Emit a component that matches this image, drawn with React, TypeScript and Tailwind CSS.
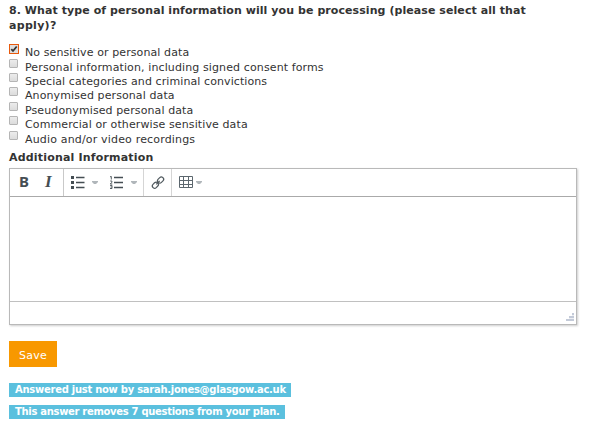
import React from "react";

const options = [
  { label: "No sensitive or personal data", checked: true, row: "h-[15px]", text: "tracking-[0.1px]" },
  { label: "Personal information, including signed consent forms", row: "h-[14px]", text: "tracking-[0.115px]" },
  { label: "Special categories and criminal convictions", row: "h-[14px]", text: "tracking-[0.09px]" },
  { label: "Anonymised personal data", row: "h-[15px]", text: "tracking-[0.1px]" },
  { label: "Pseudonymised personal data", row: "h-[14px]", text: "tracking-[0.1px]" },
  { label: "Commercial or otherwise sensitive data", row: "h-[15px]", text: "tracking-[0.11px]" },
  { label: "Audio and/or video recordings", row: "h-[15px]", text: "tracking-[0.17px]" },
];

function Checkbox({ checked }: { checked?: boolean }) {
  return checked ? (
    <span className="flex h-[10px] w-[10px] shrink-0 items-center justify-center border border-[#e8590c] bg-[#dedede]">
      <svg width="8" height="8" viewBox="0 0 8 8" fill="none" stroke="#333" strokeWidth="1.8">
        <path d="M1.3 4.2 3 6 6.7 1.5" />
      </svg>
    </span>
  ) : (
    <span className="h-[9px] w-[9px] shrink-0 rounded-[1px] border border-[#b5b5b5] bg-linear-to-b from-[#ececec] to-[#dcdcdc]" />
  );
}

function Caret() {
  return (
    <svg width="6" height="3" viewBox="0 0 6 3" fill="#b0b6ba">
      <path d="M0 0h6v1L4 3H2L0 1z" />
    </svg>
  );
}

function BulletList() {
  return (
    <svg width="14" height="14" viewBox="0 0 14 14" fill="#454e53">
      <path d="M0 0h3v3H0zM0 5h3v3H0zM0 10h3v3H0z" />
      <path d="M5 .8h8.5v1.5H5zM5 5.8h8.5v1.5H5zM5 10.8h8.5v1.5H5z" />
    </svg>
  );
}

function NumberList() {
  return (
    <svg width="13" height="14" viewBox="0 0 13 14" fill="none" stroke="#454e53">
      <path d="M4 1.5h9M4 6.5h9M4 11.5h9" strokeWidth="1.5" />
      <path d="M0 .9 1.3.4V3.5M.2 5h1.7v1.2L.3 8h2M0 9.4h2v3.1H0M.5 11h1.3" strokeWidth=".9" />
    </svg>
  );
}

function LinkIcon() {
  return (
    <svg width="14" height="14" viewBox="0 0 14 14" fill="none" stroke="#515a5f" strokeWidth="1.2">
      <rect x="-3.3" y="-2.3" width="6.6" height="4.6" rx="2.2" transform="translate(4.4 9.2) rotate(-45)" />
      <rect x="-3.3" y="-2.3" width="6.6" height="4.6" rx="2.2" transform="translate(9.6 4) rotate(-45)" />
      <path d="m5.3 8.3 3.4-3.4" />
    </svg>
  );
}

function TableIcon() {
  return (
    <svg width="14" height="14" viewBox="0 0 14 14" fill="none" stroke="#5c676e">
      <path d="M.5.5h13v11H.5zM.5 4.5h13M.5 8.5h13M4.5 0v12M9.5 0v12" />
    </svg>
  );
}

function Grip() {
  return (
    <svg width="8" height="8" viewBox="0 0 8 8" fill="#c3cad8">
      <path d="M6 0h2v8H0V6h3V3h3z" />
      <path d="M0 5.5h8M3 2.5h5" stroke="#fff" strokeWidth=".7" />
    </svg>
  );
}

export default function App() {
  return (
    <main className="h-[430px] w-[592px] bg-white pt-[3px] pl-[9px] font-['DejaVu_Sans',sans-serif] text-[11px] leading-[15px] text-[#333]">
      <h1 className="whitespace-nowrap font-bold">
        <span className="block tracking-[0.07px]">8. What type of personal information will you be processing (please select all that</span>
        <span className="block tracking-[0.3px]">apply)?</span>
      </h1>
      <div className="pt-[11px]">
        {options.map((o) => (
          <label key={o.label} className={"flex items-start whitespace-nowrap " + o.row}>
            <span className="flex w-[16px] shrink-0"><Checkbox checked={o.checked} /></span>
            <span className={"mt-px " + o.text}>{o.label}</span>
          </label>
        ))}
      </div>
      <h2 className="mt-[4px] font-bold"><span className="tracking-[0.18px]">Additional Information</span></h2>
      <section className="mt-[3px] flex h-[157px] w-[568px] flex-col border border-[#b9b9b9] shadow-[1px_1px_2px_rgba(0,0,0,0.2)]">
        <div className="flex h-[28px] shrink-0 border-b border-[#aaa] text-[#454e53]">
          <div className="flex w-[54px] items-center border-r border-[#c9c9c9] pb-[2px] pl-[9px]">
            <span className="w-[26px] font-['Noto_Sans',sans-serif] text-[15px] font-bold">B</span>
            <span className="font-['Liberation_Serif',serif] text-[17px] font-bold italic">I</span>
          </div>
          <div className="flex w-[80px] items-center border-r border-[#d5d5d5] pl-[7px]">
            <BulletList /><span className="ml-[7px] flex w-[18px]"><Caret /></span>
            <NumberList /><span className="ml-[8px] flex"><Caret /></span>
          </div>
          <div className="flex w-[28px] items-center justify-center border-r border-[#d5d5d5]"><LinkIcon /></div>
          <div className="flex items-center gap-[3px] pl-[7px]"><TableIcon /><Caret /></div>
        </div>
        <div className="grow" />
        <div className="flex h-[23px] shrink-0 items-end justify-end border-t border-[#c0c0c0] pr-[2px] pb-[3px]"><Grip /></div>
      </section>
      <button className="mt-[16px] flex h-[26px] w-[48px] items-center justify-center bg-[#f89800] text-white"><span className="pt-[2px] tracking-[0.2px]">Save</span></button>
      <div className="mt-[16px] flex h-[14px] w-[282px] items-center bg-[#5bc0de] pb-px pl-[6px] text-[10px] leading-[13px] font-bold whitespace-nowrap text-white"><span className="tracking-[-0.27px]">Answered just now by sarah.jones@glasgow.ac.uk</span></div>
      <div className="mt-[8px] flex h-[14px] w-[276px] items-center bg-[#5bc0de] pb-px pl-[6px] text-[10px] leading-[13px] font-bold whitespace-nowrap text-white"><span className="tracking-[-0.31px]">This answer removes 7 questions from your plan.</span></div>
    </main>
  );
}
